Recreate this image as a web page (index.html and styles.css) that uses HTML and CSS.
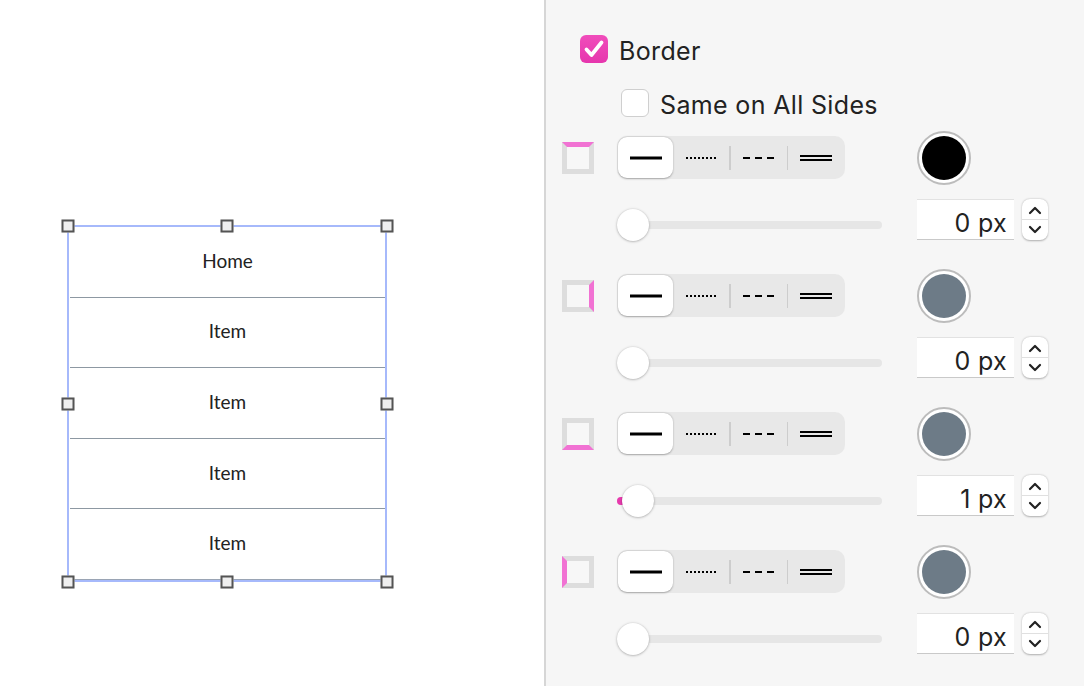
FILE: index.html
```html
<!DOCTYPE html>
<html>
<head>
<meta charset="utf-8">
<link rel="stylesheet" href="styles.css">
</head>
<body>
<div class="app">
  <div class="canvas">
    <div class="frame">
      <div class="list">
        <div class="row">Home</div>
        <div class="row">Item</div>
        <div class="row">Item</div>
        <div class="row">Item</div>
        <div class="row">Item</div>
      </div>
      <span class="handle h-tl"></span><span class="handle h-tc"></span><span class="handle h-tr"></span>
      <span class="handle h-ml"></span><span class="handle h-mr"></span>
      <span class="handle h-bl"></span><span class="handle h-bc"></span><span class="handle h-br"></span>
    </div>
  </div>
  <div class="divider"></div>
  <div class="panel">
    <label class="check-row main">
      <span class="box checked"><svg viewBox="0 0 28 28" width="28" height="28"><path d="M6.5 14.5 L11.5 20 L21.5 7.5" fill="none" stroke="#fff" stroke-width="3.8" stroke-linecap="round" stroke-linejoin="round"/></svg></span>
      <span class="label">Border</span>
    </label>
    <label class="check-row sub">
      <span class="box"></span>
      <span class="label">Same on All Sides</span>
    </label>

    <div class="groups">
      <div class="group">
        <span class="side side-top"></span>
        <div class="seg">
          <span class="opt active"><svg width="32" height="4"><line x1="0" y1="2" x2="32" y2="2" stroke="#000" stroke-width="3"/></svg></span>
          <span class="opt"><svg width="30" height="4"><line x1="0" y1="2" x2="30" y2="2" stroke="#000" stroke-width="2" stroke-dasharray="2 2"/></svg></span>
          <span class="sep"></span>
          <span class="opt"><svg width="31" height="4"><line x1="0" y1="2" x2="31" y2="2" stroke="#000" stroke-width="2" stroke-dasharray="7 5"/></svg></span>
          <span class="sep"></span>
          <span class="opt"><svg width="32" height="8"><line x1="0" y1="2" x2="32" y2="2" stroke="#000" stroke-width="2"/><line x1="0" y1="6" x2="32" y2="6" stroke="#000" stroke-width="2"/></svg></span>
        </div>
        <span class="swatch"><span class="fill black"></span></span>
        <span></span>
        <div class="slider"><span class="track"></span><span class="thumb"></span></div>
        <div class="num"><span class="field">0 px</span><span class="stepper"><span class="up"><svg width="14" height="9"><path d="M2 7 L7 2 L12 7" fill="none" stroke="#222" stroke-width="2.2" stroke-linecap="round" stroke-linejoin="round"/></svg></span><span class="down"><svg width="14" height="9"><path d="M2 2 L7 7 L12 2" fill="none" stroke="#222" stroke-width="2.2" stroke-linecap="round" stroke-linejoin="round"/></svg></span></span></div>
      </div>

      <div class="group">
        <span class="side side-right"></span>
        <div class="seg">
          <span class="opt active"><svg width="32" height="4"><line x1="0" y1="2" x2="32" y2="2" stroke="#000" stroke-width="3"/></svg></span>
          <span class="opt"><svg width="30" height="4"><line x1="0" y1="2" x2="30" y2="2" stroke="#000" stroke-width="2" stroke-dasharray="2 2"/></svg></span>
          <span class="sep"></span>
          <span class="opt"><svg width="31" height="4"><line x1="0" y1="2" x2="31" y2="2" stroke="#000" stroke-width="2" stroke-dasharray="7 5"/></svg></span>
          <span class="sep"></span>
          <span class="opt"><svg width="32" height="8"><line x1="0" y1="2" x2="32" y2="2" stroke="#000" stroke-width="2"/><line x1="0" y1="6" x2="32" y2="6" stroke="#000" stroke-width="2"/></svg></span>
        </div>
        <span class="swatch"><span class="fill slate"></span></span>
        <span></span>
        <div class="slider"><span class="track"></span><span class="thumb"></span></div>
        <div class="num"><span class="field">0 px</span><span class="stepper"><span class="up"><svg width="14" height="9"><path d="M2 7 L7 2 L12 7" fill="none" stroke="#222" stroke-width="2.2" stroke-linecap="round" stroke-linejoin="round"/></svg></span><span class="down"><svg width="14" height="9"><path d="M2 2 L7 7 L12 2" fill="none" stroke="#222" stroke-width="2.2" stroke-linecap="round" stroke-linejoin="round"/></svg></span></span></div>
      </div>

      <div class="group">
        <span class="side side-bottom"></span>
        <div class="seg">
          <span class="opt active"><svg width="32" height="4"><line x1="0" y1="2" x2="32" y2="2" stroke="#000" stroke-width="3"/></svg></span>
          <span class="opt"><svg width="30" height="4"><line x1="0" y1="2" x2="30" y2="2" stroke="#000" stroke-width="2" stroke-dasharray="2 2"/></svg></span>
          <span class="sep"></span>
          <span class="opt"><svg width="31" height="4"><line x1="0" y1="2" x2="31" y2="2" stroke="#000" stroke-width="2" stroke-dasharray="7 5"/></svg></span>
          <span class="sep"></span>
          <span class="opt"><svg width="32" height="8"><line x1="0" y1="2" x2="32" y2="2" stroke="#000" stroke-width="2"/><line x1="0" y1="6" x2="32" y2="6" stroke="#000" stroke-width="2"/></svg></span>
        </div>
        <span class="swatch"><span class="fill slate"></span></span>
        <span></span>
        <div class="slider"><span class="track"></span><span class="progress" style="width: 10px"></span><span class="thumb" style="left: 5px"></span></div>
        <div class="num"><span class="field">1 px</span><span class="stepper"><span class="up"><svg width="14" height="9"><path d="M2 7 L7 2 L12 7" fill="none" stroke="#222" stroke-width="2.2" stroke-linecap="round" stroke-linejoin="round"/></svg></span><span class="down"><svg width="14" height="9"><path d="M2 2 L7 7 L12 2" fill="none" stroke="#222" stroke-width="2.2" stroke-linecap="round" stroke-linejoin="round"/></svg></span></span></div>
      </div>

      <div class="group">
        <span class="side side-left"></span>
        <div class="seg">
          <span class="opt active"><svg width="32" height="4"><line x1="0" y1="2" x2="32" y2="2" stroke="#000" stroke-width="3"/></svg></span>
          <span class="opt"><svg width="30" height="4"><line x1="0" y1="2" x2="30" y2="2" stroke="#000" stroke-width="2" stroke-dasharray="2 2"/></svg></span>
          <span class="sep"></span>
          <span class="opt"><svg width="31" height="4"><line x1="0" y1="2" x2="31" y2="2" stroke="#000" stroke-width="2" stroke-dasharray="7 5"/></svg></span>
          <span class="sep"></span>
          <span class="opt"><svg width="32" height="8"><line x1="0" y1="2" x2="32" y2="2" stroke="#000" stroke-width="2"/><line x1="0" y1="6" x2="32" y2="6" stroke="#000" stroke-width="2"/></svg></span>
        </div>
        <span class="swatch"><span class="fill slate"></span></span>
        <span></span>
        <div class="slider"><span class="track"></span><span class="thumb"></span></div>
        <div class="num"><span class="field">0 px</span><span class="stepper"><span class="up"><svg width="14" height="9"><path d="M2 7 L7 2 L12 7" fill="none" stroke="#222" stroke-width="2.2" stroke-linecap="round" stroke-linejoin="round"/></svg></span><span class="down"><svg width="14" height="9"><path d="M2 2 L7 7 L12 2" fill="none" stroke="#222" stroke-width="2.2" stroke-linecap="round" stroke-linejoin="round"/></svg></span></span></div>
      </div>
    </div>
  </div>
</div>
</body>
</html>
```

FILE: styles.css
```css
* { box-sizing: border-box; }
html, body { margin: 0; padding: 0; }
body {
  width: 1084px;
  height: 686px;
  overflow: hidden;
  font-family: Inter, "Noto Sans", "Liberation Sans", sans-serif;
  color: #222;
}
.app {
  display: flex;
  width: 1084px;
  height: 686px;
}

/* ---------- canvas ---------- */
.canvas {
  width: 544px;
  height: 686px;
  background: #fff;
  padding: 225px 0 0 67px;
}
.frame {
  position: relative;
  width: 320px;
  height: 357px;
  border: 2px solid #a6b9fb;
}
.list {
  padding: 0 0 0 1px;
}
.row {
  height: 70.6px;
  border-bottom: 1.5px solid #8d98a2;
  display: flex;
  align-items: center;
  justify-content: center;
  font-family: Lato, "Open Sans", sans-serif;
  font-size: 19px;
  color: #222;
  padding-bottom: 3px;
}
.row:last-child { border-bottom-color: #9aa4b4; }
.handle {
  position: absolute;
  width: 13px;
  height: 13px;
  border: 2px solid #545454;
  background: #efefef;
  transform: translate(-50%, -50%);
}
.h-tl { left: -1px; top: -1px; }
.h-tc { left: 50%; top: -1px; }
.h-tr { left: calc(100% + 2px); top: -1px; }
.h-ml { left: -1px; top: 50%; }
.h-mr { left: calc(100% + 2px); top: 50%; }
.h-bl { left: -1px; top: calc(100% + 2px); }
.h-bc { left: 50%; top: calc(100% + 2px); }
.h-br { left: calc(100% + 2px); top: calc(100% + 2px); }

.divider {
  width: 2px;
  height: 686px;
  background: #d6d6d6;
}

/* ---------- panel ---------- */
.panel {
  flex: 1;
  background: #f6f6f6;
  padding-top: 35px;
}
.check-row {
  display: flex;
  align-items: center;
  gap: 11px;
  height: 28px;
}
.check-row.main { margin-left: 34px; }
.check-row.sub { margin-left: 75px; margin-top: 26px; }
.box {
  width: 28px;
  height: 28px;
  border-radius: 6px;
  background: #fff;
  border: 1px solid #cfcfcf;
  display: block;
}
.box.checked {
  background: linear-gradient(#f04dbb, #e636ad);
  border: none;
}
.box svg { display: block; }
.label {
  font-size: 25px;
  line-height: 28px;
  color: #222;
  letter-spacing: 0.35px;
  padding-top: 3px;
}

.groups {
  margin-top: 19px;
  padding-left: 16px;
}
.group {
  display: grid;
  grid-template-columns: 55px 300px 131px;
  grid-template-rows: 43px 41px;
  row-gap: 20px;
  align-items: center;
  height: 138px;
}
.side {
  display: block;
  width: 32px;
  height: 32px;
  border: 5px solid #dddddd;
  background: #f7f7f7;
}
.side-top { border-top-color: #f172d3; }
.side-right { border-right-color: #f172d3; }
.side-bottom { border-bottom-color: #f172d3; }
.side-left { border-left-color: #f172d3; }

.seg {
  width: 228px;
  height: 43px;
  background: #e8e8e8;
  border-radius: 10px;
  display: flex;
  align-items: center;
  padding: 1px;
}
.opt {
  flex: 1;
  height: 41px;
  display: flex;
  align-items: center;
  justify-content: center;
}
.opt svg { display: block; }
.opt.active {
  flex: 0 0 55px;
  background: #fff;
  border-radius: 9px;
  box-shadow: 0 0.5px 2px rgba(0, 0, 0, 0.3);
}
.sep {
  width: 1.5px;
  height: 24px;
  background: #cdcdcd;
}

.swatch {
  width: 54px;
  height: 54px;
  border-radius: 50%;
  border: 2px solid #bcbcbc;
  background: #fff;
  display: flex;
  align-items: center;
  justify-content: center;
}
.fill {
  width: 44px;
  height: 44px;
  border-radius: 50%;
}
.fill.black { background: #000; }
.fill.slate { background: #6d7b87; }

.slider {
  position: relative;
  width: 265px;
  height: 32px;
  align-self: start;
  margin-top: 10px;
}
.track {
  position: absolute;
  left: 0;
  right: 0;
  top: 12px;
  height: 8px;
  border-radius: 4px;
  background: #e6e6e6;
}
.progress {
  position: absolute;
  left: 0;
  top: 12px;
  height: 8px;
  border-radius: 4px;
  background: #e83aae;
}
.thumb {
  position: absolute;
  left: 0;
  top: 0;
  width: 32px;
  height: 32px;
  border-radius: 50%;
  background: #fff;
  box-shadow: 0 0.5px 2.5px rgba(0, 0, 0, 0.35);
}

.num {
  display: flex;
  align-items: center;
  gap: 8px;
  height: 41px;
}
.field {
  width: 97px;
  height: 41px;
  background: #fff;
  border-top: 1px solid #e2e2e2;
  border-bottom: 1px solid #c9c9c9;
  font-size: 25px;
  line-height: 40px;
  text-align: right;
  padding-right: 7px;
  padding-top: 3px;
  letter-spacing: 0.3px;
  color: #222;
}
.stepper {
  width: 26px;
  height: 41px;
  background: #fff;
  border-radius: 8px;
  box-shadow: 0 0.5px 2px rgba(0, 0, 0, 0.3);
  display: flex;
  flex-direction: column;
}
.stepper .up, .stepper .down {
  flex: 1;
  display: flex;
  align-items: center;
  justify-content: center;
}
.stepper .up { border-bottom: 1px solid #e0e0e0; padding-top: 2px; }
.stepper .down { padding-bottom: 2px; }
.stepper svg { display: block; }
```
